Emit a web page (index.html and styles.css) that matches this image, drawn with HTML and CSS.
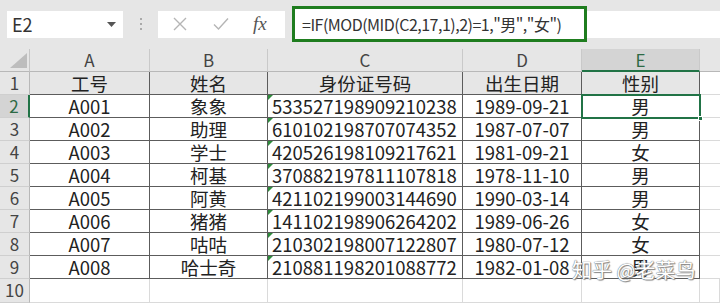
FILE: index.html
```html
<!DOCTYPE html>
<html lang="zh-CN">
<head>
<meta charset="utf-8">
<link rel="stylesheet" href="styles.css">
</head>
<body>
<div class="app">
  <div class="toolbar">
    <div class="namebox"><span>E2</span><svg class="dd" width="9" height="5" viewBox="0 0 9 5"><path d="M0 0h9L4.5 5z" fill="#555"/></svg></div>
    <div class="grip"><i></i><i></i><i></i></div>
    <div class="btns">
      <svg width="14" height="14" viewBox="0 0 14 14"><path d="M1 1L13 13M13 1L1 13" stroke="#b5b5b5" stroke-width="1.4" fill="none"/></svg>
      <svg width="16" height="14" viewBox="0 0 16 14"><path d="M1 7.5L5.5 12L15 1.5" stroke="#b5b5b5" stroke-width="1.4" fill="none"/></svg>
      <span class="fx">fx</span>
    </div>
    <div class="formula"><span class="fbox">=IF(MOD(MID(C2,17,1),2)=1,"男","女")</span></div>
  </div>
  <div class="sheet">
    <div class="corner"><svg width="17" height="15" viewBox="0 0 17 15"><path d="M17 0V15H0z" fill="#bdbdbd"/></svg></div>
    <div class="ch">A</div><div class="ch">B</div><div class="ch">C</div><div class="ch">D</div><div class="ch sel">E</div><div class="ch last"></div>

    <div class="rh">1</div>
    <div class="c hd">工号</div><div class="c hd">姓名</div><div class="c hd">身份证号码</div><div class="c hd">出生日期</div><div class="c hd">性别</div><div class="c e"></div>

    <div class="rh sel">2</div>
    <div class="c">A001</div><div class="c">象象</div><div class="c id">533527198909210238</div><div class="c">1989-09-21</div><div class="c active">男<i class="handle"></i></div><div class="c e"></div>

    <div class="rh">3</div>
    <div class="c">A002</div><div class="c">助理</div><div class="c id">610102198707074352</div><div class="c">1987-07-07</div><div class="c">男</div><div class="c e"></div>

    <div class="rh">4</div>
    <div class="c">A003</div><div class="c">学士</div><div class="c id">420526198109217621</div><div class="c">1981-09-21</div><div class="c">女</div><div class="c e"></div>

    <div class="rh">5</div>
    <div class="c">A004</div><div class="c">柯基</div><div class="c id">370882197811107818</div><div class="c">1978-11-10</div><div class="c">男</div><div class="c e"></div>

    <div class="rh">6</div>
    <div class="c">A005</div><div class="c">阿黄</div><div class="c id">421102199003144690</div><div class="c">1990-03-14</div><div class="c">男</div><div class="c e"></div>

    <div class="rh">7</div>
    <div class="c">A006</div><div class="c">猪猪</div><div class="c id">141102198906264202</div><div class="c">1989-06-26</div><div class="c">女</div><div class="c e"></div>

    <div class="rh">8</div>
    <div class="c">A007</div><div class="c">咕咕</div><div class="c id">210302198007122807</div><div class="c">1980-07-12</div><div class="c">女</div><div class="c e"></div>

    <div class="rh">9</div>
    <div class="c">A008</div><div class="c">哈士奇</div><div class="c id">210881198201088772</div><div class="c">1982-01-08</div><div class="c">男</div><div class="c e"></div>

    <div class="rh">10</div>
    <div class="c blank"></div><div class="c blank"></div><div class="c blank"></div><div class="c blank"></div><div class="c blank"></div><div class="c blank e"></div>
  </div>
  <div class="watermark">知乎 @老菜鸟</div>
</div>
</body>
</html>
```

FILE: styles.css
```css
* { box-sizing: border-box; }
html, body { margin: 0; padding: 0; }
body {
  width: 720px;
  height: 303px;
  overflow: hidden;
  background: #e6e6e6;
  font-family: "Noto Sans CJK SC", "Noto Sans", sans-serif;
  color: #222;
}
.app { position: relative; width: 720px; height: 303px; overflow: hidden; }

.toolbar {
  height: 49px;
  display: flex;
  align-items: center;
  padding-left: 7px;
  padding-bottom: 1px;
}
.namebox {
  width: 116px;
  height: 27px;
  background: #fff;
  display: flex;
  align-items: center;
  justify-content: space-between;
  padding: 0 7px 0 5px;
  font-size: 18px;
  color: #333;
}
.grip {
  width: 35px;
  display: flex;
  flex-direction: column;
  align-items: center;
  gap: 3px;
}
.grip i { display: block; width: 2px; height: 2px; background: #aaa; }
.btns {
  width: 127px;
  height: 27px;
  background: #fff;
  display: flex;
  align-items: center;
  padding-left: 15px;
  gap: 26px;
}
.fx {
  font-family: "Liberation Serif", "DejaVu Serif", serif;
  font-style: italic;
  font-size: 19px;
  color: #555;
  margin-left: -2px;
}
.formula {
  flex: 1;
  height: 27px;
  margin-left: 7px;
  background: #fff;
  display: flex;
  align-items: center;
}
.fbox {
  height: 36px;
  width: 295px;
  border: 3px solid #1f7d1f;
  display: flex;
  align-items: center;
  padding-left: 7px;
  font-size: 16px;
  color: #333;
  white-space: nowrap;
  letter-spacing: -0.5px;
  background: #fff;
}

.sheet {
  display: grid;
  grid-template-columns: 30px 120px 118px 195px 119px 118px 20px;
  grid-template-rows: 23px repeat(9, 23px) 24px;
  font-size: 18.5px;
}
.corner {
  background: #e6e6e6;
  border-right: 1px solid #c6c6c6;
  border-bottom: 1px solid #b8b8b8;
  display: flex;
  align-items: flex-end;
  justify-content: flex-end;
  padding: 0 2px 3px 0;
}
.ch {
  background: #e6e6e6;
  border-right: 1px solid #c9c9c9;
  border-bottom: 1px solid #b8b8b8;
  text-align: center;
  font-size: 17px;
  line-height: 22px;
  color: #444;
}
.ch.sel { background: #d4d4d4; border-bottom: 2px solid #217346; color: #2d6a45; }
.ch.last { border-right: none; }
.rh {
  background: #e6e6e6;
  border-right: 1px solid #b8b8b8;
  border-bottom: 1px solid #cfcfcf;
  text-align: center;
  font-size: 17px;
  line-height: 22px;
  color: #444;
}
.rh.sel { background: #d4d4d4; border-right: 2px solid #217346; color: #2d6a45; }

.c {
  position: relative;
  background: #fff;
  border-right: 1px solid #5c5c5c;
  border-bottom: 1px solid #5c5c5c;
  text-align: center;
  line-height: 22px;
  white-space: nowrap;
}
.c.hd { background: #e6e6e6; }
.c.e { border-right: none; border-bottom: 1px solid #dadada; background: #fff; }
.c.id { text-align: left; padding-left: 4px; }
.c.id::before {
  content: "";
  position: absolute;
  left: 0;
  top: 0;
  border-top: 5px solid #2e8b3c;
  border-right: 5px solid transparent;
}
.c.blank { border-right: 1px solid #dadada; border-bottom: 1px solid #dadada; }
.c.active {
  outline: 2px solid #217346;
  outline-offset: -1px;
  z-index: 1;
}
.handle {
  position: absolute;
  right: -4px;
  bottom: -4px;
  width: 5px;
  height: 5px;
  background: #217346;
  border: 1px solid #fff;
}

.watermark {
  position: absolute;
  left: 572px;
  top: 257px;
  font-size: 20px;
  line-height: 26px;
  color: #fff;
  text-shadow: 0 0 1px #777, 0 0 1px #777, 1px 1px 1px #888;
  white-space: nowrap;
  z-index: 2;
}
```
